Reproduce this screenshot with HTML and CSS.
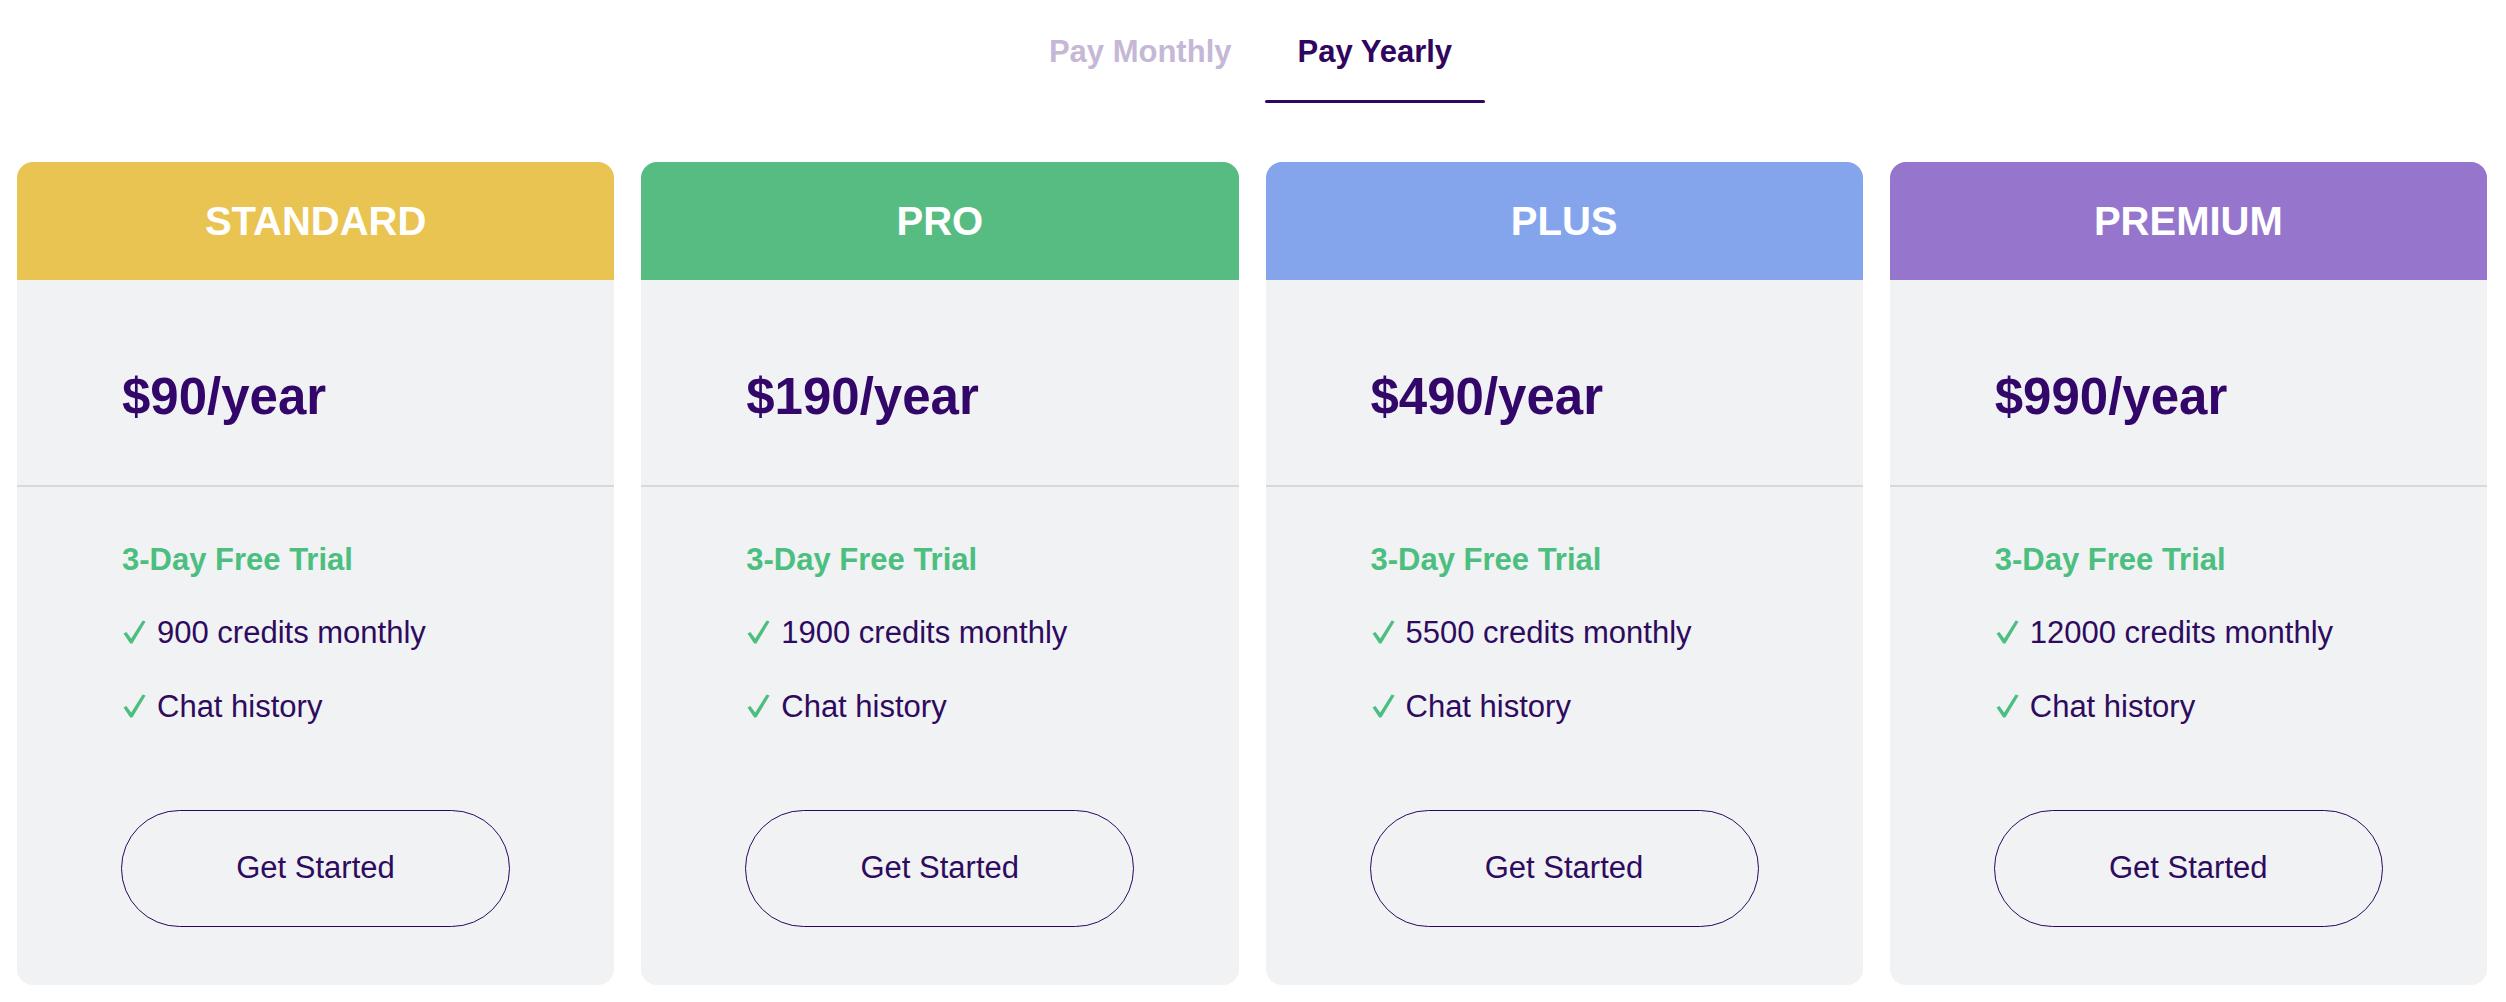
FILE: index.html
```html
<!DOCTYPE html>
<html lang="en">
<head>
<meta charset="utf-8">
<title>Pricing</title>
<link rel="stylesheet" href="styles.css">
</head>
<body>
<div class="page">
  <nav class="tabs">
    <div class="tab"><span class="tab-label">Pay Monthly</span></div>
    <div class="tab active"><span class="tab-label">Pay Yearly</span></div>
  </nav>
  <div class="plans">
    <div class="card">
      <div class="card-head standard">STANDARD</div>
      <div class="price">$90/year</div>
      <div class="features">
        <div class="trial">3-Day Free Trial</div>
        <div class="item"><svg class="check" viewBox="0 0 23 24"><path d="M0.5 13.6 L3.4 12 L8.2 18.6 L19.6 0.6 L22.6 1.6 L9.4 23.6 L7.2 23.6 Z"/></svg>900 credits monthly</div>
        <div class="item"><svg class="check" viewBox="0 0 23 24"><path d="M0.5 13.6 L3.4 12 L8.2 18.6 L19.6 0.6 L22.6 1.6 L9.4 23.6 L7.2 23.6 Z"/></svg>Chat history</div>
      </div>
      <div class="action"><button class="btn">Get Started</button></div>
    </div>
    <div class="card">
      <div class="card-head pro">PRO</div>
      <div class="price">$190/year</div>
      <div class="features">
        <div class="trial">3-Day Free Trial</div>
        <div class="item"><svg class="check" viewBox="0 0 23 24"><path d="M0.5 13.6 L3.4 12 L8.2 18.6 L19.6 0.6 L22.6 1.6 L9.4 23.6 L7.2 23.6 Z"/></svg>1900 credits monthly</div>
        <div class="item"><svg class="check" viewBox="0 0 23 24"><path d="M0.5 13.6 L3.4 12 L8.2 18.6 L19.6 0.6 L22.6 1.6 L9.4 23.6 L7.2 23.6 Z"/></svg>Chat history</div>
      </div>
      <div class="action"><button class="btn">Get Started</button></div>
    </div>
    <div class="card">
      <div class="card-head plus">PLUS</div>
      <div class="price">$490/year</div>
      <div class="features">
        <div class="trial">3-Day Free Trial</div>
        <div class="item"><svg class="check" viewBox="0 0 23 24"><path d="M0.5 13.6 L3.4 12 L8.2 18.6 L19.6 0.6 L22.6 1.6 L9.4 23.6 L7.2 23.6 Z"/></svg>5500 credits monthly</div>
        <div class="item"><svg class="check" viewBox="0 0 23 24"><path d="M0.5 13.6 L3.4 12 L8.2 18.6 L19.6 0.6 L22.6 1.6 L9.4 23.6 L7.2 23.6 Z"/></svg>Chat history</div>
      </div>
      <div class="action"><button class="btn">Get Started</button></div>
    </div>
    <div class="card">
      <div class="card-head premium">PREMIUM</div>
      <div class="price">$990/year</div>
      <div class="features">
        <div class="trial">3-Day Free Trial</div>
        <div class="item"><svg class="check" viewBox="0 0 23 24"><path d="M0.5 13.6 L3.4 12 L8.2 18.6 L19.6 0.6 L22.6 1.6 L9.4 23.6 L7.2 23.6 Z"/></svg>12000 credits monthly</div>
        <div class="item"><svg class="check" viewBox="0 0 23 24"><path d="M0.5 13.6 L3.4 12 L8.2 18.6 L19.6 0.6 L22.6 1.6 L9.4 23.6 L7.2 23.6 Z"/></svg>Chat history</div>
      </div>
      <div class="action"><button class="btn">Get Started</button></div>
    </div>
  </div>
</div>
</body>
</html>
```

FILE: styles.css
```css
* { box-sizing: border-box; }
html, body {
  margin: 0;
  padding: 0;
  background: #ffffff;
}
body {
  font-family: "Liberation Sans", Arial, sans-serif;
  color: #30065e;
}
.page {
  width: 2506px;
  padding: 34px 19px 0 17px;
}
.tabs {
  display: flex;
  justify-content: center;
  padding-right: 3px;
}
.tab {
  display: flex;
  flex-direction: column;
  gap: 30px;
  font-size: 31px;
  line-height: 36px;
  font-weight: 700;
  color: #c5b8d6;
  text-align: center;
}
.tab-label {
  padding: 0 33px;
}
.tab::after {
  content: "";
  height: 3px;
  border-radius: 2px;
  background: transparent;
}
.tab.active { color: #30065e; }
.tab.active::after { background: #30065e; }

.plans {
  margin-top: 59px;
  display: grid;
  grid-template-columns: repeat(4, 1fr);
  gap: 27px;
}
.card {
  background: #f1f2f4;
  border-radius: 16px;
  overflow: hidden;
  display: flex;
  flex-direction: column;
}
.card-head {
  height: 118px;
  display: flex;
  align-items: center;
  justify-content: center;
  color: #ffffff;
  font-size: 40px;
  font-weight: 700;
  line-height: 46px;
}
.standard { background: #e9c452; }
.pro { background: #57bc82; }
.plus { background: #84a5ec; }
.premium { background: #9675cc; }

.price {
  padding: 87px 0 58px 105px;
  font-size: 51px;
  line-height: 60px;
  font-weight: 700;
  color: #33066a;
  border-bottom: 2px solid #d7d7dc;
}
.features {
  padding: 55px 0 0 105px;
  display: flex;
  flex-direction: column;
  gap: 37.3px;
  font-size: 31px;
  line-height: 36px;
}
.trial {
  font-weight: 700;
  color: #4cbf80;
}
.item { color: #2e0b5e; }
.check {
  width: 23px;
  height: 24px;
  margin: 0 11px 0 1px;
  vertical-align: -1px;
  fill: #4cbf80;
}
.action {
  padding: 85px 0 58px 104px;
}
.btn {
  width: 389px;
  height: 117px;
  border: 1.6px solid #2a0860;
  border-radius: 60px;
  background: transparent;
  font-family: "Liberation Sans", Arial, sans-serif;
  font-size: 31px;
  color: #2e0b5e;
  padding: 0;
}
```
